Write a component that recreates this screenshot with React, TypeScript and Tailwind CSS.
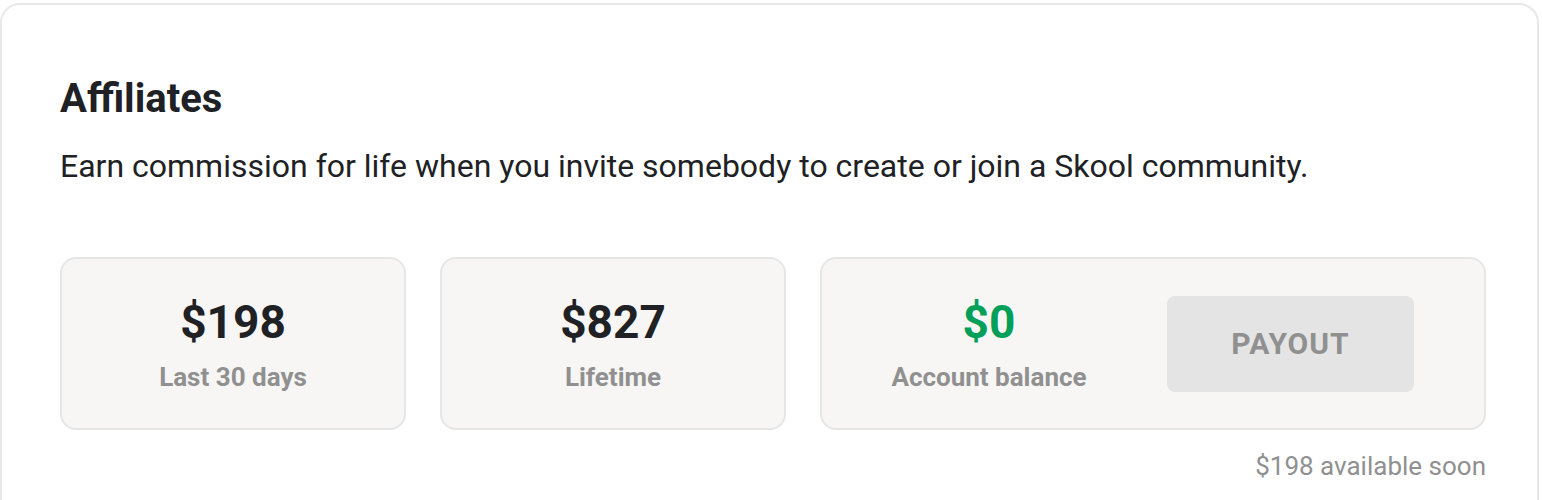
import React from "react";

export default function App() {
  return (
    <div className="min-h-[500px] bg-white pt-[3px] pr-[3px] font-['Roboto',sans-serif] overflow-hidden">
      <div className="h-[560px] rounded-[20px] border-2 border-[#e8e8e8] bg-white px-[58px] pt-[70px]">
        <h1 className="text-[40px] font-bold leading-[48px] text-[#202124]">Affiliates</h1>
        <p className="mt-[23px] text-[32px] leading-[40px] text-[#202124]">
          Earn commission for life when you invite somebody to create or join a Skool community.
        </p>
        <div className="mt-[71px] flex w-[1426px] gap-[34px]">
          <div className="flex h-[173px] w-[346px] flex-col items-center justify-center rounded-[16px] border-2 border-[#e6e6e6] bg-[#f7f6f5]">
            <div className="text-[46px] font-bold leading-[54px] text-[#202124]">$198</div>
            <div className="mt-[12px] text-[26px] font-bold leading-[32px] text-[#909090]">Last 30 days</div>
          </div>
          <div className="flex h-[173px] w-[346px] flex-col items-center justify-center rounded-[16px] border-2 border-[#e6e6e6] bg-[#f7f6f5]">
            <div className="text-[46px] font-bold leading-[54px] text-[#202124]">$827</div>
            <div className="mt-[12px] text-[26px] font-bold leading-[32px] text-[#909090]">Lifetime</div>
          </div>
          <div className="flex flex-col">
            <div className="flex h-[173px] w-[666px] items-center gap-[81px] rounded-[16px] border-2 border-[#e6e6e6] bg-[#f7f6f5] pl-[70px]">
              <div className="flex w-[194px] flex-col items-center">
                <div className="text-[46px] font-bold leading-[54px] text-[#00a05a]">$0</div>
                <div className="mt-[12px] whitespace-nowrap text-[26px] font-bold leading-[32px] text-[#909090]">Account balance</div>
              </div>
              <button className="flex h-[96px] w-[247px] items-center justify-center rounded-[8px] bg-[#e4e4e4] text-[30px] font-bold tracking-[1px] text-[#909090]">
                PAYOUT
              </button>
            </div>
            <div className="mt-[20px] text-right text-[26px] leading-[32px] text-[#909090]">$198 available soon</div>
          </div>
        </div>
      </div>
    </div>
  );
}
